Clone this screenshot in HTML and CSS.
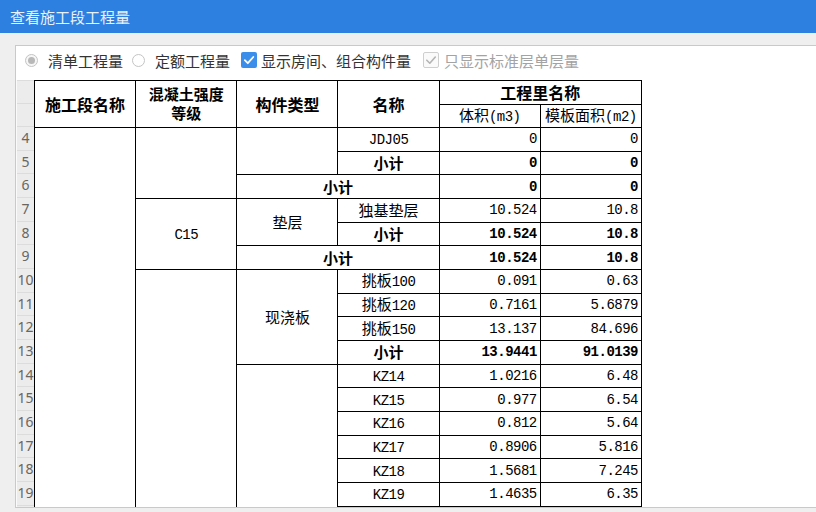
FILE: index.html
```html
<!DOCTYPE html>
<html lang="zh">
<head>
<meta charset="utf-8">
<title>查看施工段工程量</title>
<link rel="stylesheet" href="styles.css">
</head>
<body>
<div class="title">查看施工段工程量</div>
<div class="body">
  <div class="panel">
    <div class="toolbar">
      <span class="radio checked"></span><span class="label l1">清单工程量</span>
      <span class="radio r2"></span><span class="label l2">定额工程量</span>
      <span class="check on"><svg viewBox="0 0 16 16" width="16" height="16"><path d="M3.8 8.2 L6.8 11.2 L12.3 5" fill="none" stroke="#fff" stroke-width="1.8" stroke-linecap="round" stroke-linejoin="round"/></svg></span><span class="label l3">显示房间、组合构件量</span>
      <span class="check off"><svg viewBox="0 0 16 16" width="16" height="16"><path d="M3.8 8.2 L6.8 11.2 L12.3 5" fill="none" stroke="#b4b4b4" stroke-width="1.6" stroke-linecap="round" stroke-linejoin="round"/></svg></span><span class="label dis">只显示标准层单层量</span>
    </div>
    <div class="grid">
      <div class="rowhead">
        <div class="rh hd"></div>
        <div class="rh hd"></div>
        <div class="rh">4</div>
        <div class="rh">5</div>
        <div class="rh">6</div>
        <div class="rh">7</div>
        <div class="rh">8</div>
        <div class="rh">9</div>
        <div class="rh">10</div>
        <div class="rh">11</div>
        <div class="rh">12</div>
        <div class="rh">13</div>
        <div class="rh">14</div>
        <div class="rh">15</div>
        <div class="rh">16</div>
        <div class="rh">17</div>
        <div class="rh">18</div>
        <div class="rh">19</div>
        <div class="rh"></div>
      </div>
      <table class="sheet">
        <colgroup><col><col><col><col><col><col></colgroup>
        <tr class="hr">
          <th rowspan="2">施工段名称</th>
          <th rowspan="2" class="two"><span class="ln">混凝土强度</span><span class="ln">等级</span></th>
          <th rowspan="2">构件类型</th>
          <th rowspan="2">名称</th>
          <th colspan="2">工程里名称</th>
        </tr>
        <tr class="hr">
          <td class="sub">体积<span class="m">(m3)</span></td>
          <td class="sub">模板面积<span class="m">(m2)</span></td>
        </tr>
        <tr>
          <td rowspan="17"></td>
          <td rowspan="3"></td>
          <td rowspan="2"></td>
          <td><span class="m">JDJ05</span></td>
          <td class="n">0</td>
          <td class="n">0</td>
        </tr>
        <tr>
          <td class="b">小计</td>
          <td class="n b">0</td>
          <td class="n b">0</td>
        </tr>
        <tr>
          <td colspan="2" class="b">小计</td>
          <td class="n b">0</td>
          <td class="n b">0</td>
        </tr>
        <tr>
          <td rowspan="3"><span class="m">C15</span></td>
          <td rowspan="2">垫层</td>
          <td>独基垫层</td>
          <td class="n">10.524</td>
          <td class="n">10.8</td>
        </tr>
        <tr>
          <td class="b">小计</td>
          <td class="n b">10.524</td>
          <td class="n b">10.8</td>
        </tr>
        <tr>
          <td colspan="2" class="b">小计</td>
          <td class="n b">10.524</td>
          <td class="n b">10.8</td>
        </tr>
        <tr>
          <td rowspan="11"></td>
          <td rowspan="4">现浇板</td>
          <td>挑板<span class="m">100</span></td>
          <td class="n">0.091</td>
          <td class="n">0.63</td>
        </tr>
        <tr>
          <td>挑板<span class="m">120</span></td>
          <td class="n">0.7161</td>
          <td class="n">5.6879</td>
        </tr>
        <tr>
          <td>挑板<span class="m">150</span></td>
          <td class="n">13.137</td>
          <td class="n">84.696</td>
        </tr>
        <tr>
          <td class="b">小计</td>
          <td class="n b">13.9441</td>
          <td class="n b">91.0139</td>
        </tr>
        <tr>
          <td rowspan="7"></td>
          <td><span class="m">KZ14</span></td>
          <td class="n">1.0216</td>
          <td class="n">6.48</td>
        </tr>
        <tr>
          <td><span class="m">KZ15</span></td>
          <td class="n">0.977</td>
          <td class="n">6.54</td>
        </tr>
        <tr>
          <td><span class="m">KZ16</span></td>
          <td class="n">0.812</td>
          <td class="n">5.64</td>
        </tr>
        <tr>
          <td><span class="m">KZ17</span></td>
          <td class="n">0.8906</td>
          <td class="n">5.816</td>
        </tr>
        <tr>
          <td><span class="m">KZ18</span></td>
          <td class="n">1.5681</td>
          <td class="n">7.245</td>
        </tr>
        <tr>
          <td><span class="m">KZ19</span></td>
          <td class="n">1.4635</td>
          <td class="n">6.35</td>
        </tr>
        <tr>
          <td></td>
          <td></td>
          <td></td>
        </tr>
      </table>
    </div>
  </div>
</div>
</body>
</html>
```

FILE: styles.css
```css
* { box-sizing: border-box; }

html, body {
  margin: 0;
  padding: 0;
}

body {
  width: 816px;
  height: 512px;
  overflow: hidden;
  background: #efefef;
  font-family: "Noto Sans CJK SC", "Noto Sans", sans-serif;
}

.title {
  height: 33px;
  background: #2d7fe0;
  color: #e9f1fc;
  font-size: 15px;
  line-height: 33px;
  padding-left: 10px;
}

.body {
  padding: 12px 0 0 15px;
}

.panel {
  height: 463px;
  background: #fff;
  border-top: 1px solid #c9c9c9;
  border-left: 1px solid #c9c9c9;
  border-bottom: 1px solid #c9c9c9;
  display: flex;
  flex-direction: column;
  overflow: hidden;
}

.toolbar {
  height: 34px;
  flex: none;
  display: flex;
  align-items: center;
  padding: 0 0 6px 9px;
  font-size: 15px;
  color: #333;
}

.radio {
  width: 13px;
  height: 13px;
  border-radius: 50%;
  border: 1px solid #c4c4c4;
  background: #f6f6f6;
  display: flex;
  align-items: center;
  justify-content: center;
  flex: none;
}

.radio.checked::after {
  content: "";
  width: 7px;
  height: 7px;
  border-radius: 50%;
  background: #b8b8b8;
}

.radio.r2 {
  margin-left: 9px;
  background: #fff;
}

.label {
  margin-left: 10px;
  white-space: nowrap;
}

.check {
  width: 16px;
  height: 16px;
  border-radius: 2px;
  flex: none;
  display: flex;
}

.check.on {
  margin-left: 11px;
  background: #3b8ee9;
}

.check.off {
  margin-left: 12px;
  background: #fafafa;
  border: 1px solid #cfcfcf;
}

.check.off svg {
  margin: -1px;
}

.l3 { margin-left: 4px; }

.label.dis {
  margin-left: 5px;
  color: #a3a3a3;
}

.grid {
  height: 427px;
  flex: none;
  overflow: hidden;
  display: flex;
  align-items: flex-start;
}

.rowhead {
  width: 18px;
  flex: none;
  background: #ececec;
  border-left: 1px solid #fafafa;
}

.rh {
  height: 23.67px;
  border-bottom: 1px solid #dcdcdc;
  font-family: "Noto Sans", sans-serif;
  font-size: 14px;
  line-height: 22px;
  color: #6a6560;
  text-align: center;
  white-space: nowrap;
  display: flex;
  justify-content: center;
}

.rh.hd {
  height: 23.5px;
}

.rh.hd:first-child {
  border-top: 1px solid #dcdcdc;
}

.sheet {
  border-collapse: collapse;
  table-layout: fixed;
  width: 608px;
  flex: none;
}

.sheet col {
  width: 101px;
}

.sheet tr {
  height: 23.67px;
}

.sheet tr.hr {
  height: 23.5px;
}

.sheet th,
.sheet td {
  border: 1px solid #000;
  padding: 0 4px;
  text-align: center;
  vertical-align: middle;
  font-size: 15px;
  line-height: 20px;
  color: #000;
  font-weight: 400;
  white-space: nowrap;
  overflow: hidden;
}

.sheet th {
  font-size: 16px;
  font-weight: 700;
}

.sheet th.two {
  font-size: 15px;
  line-height: 22px;
  padding-bottom: 3px;
}

.ln {
  display: block;
  height: 19px;
  line-height: 19px;
}

.sheet .sub {
  font-size: 15px;
}

.m,
.sheet td.n {
  font-family: "Liberation Mono", "Noto Sans CJK SC", monospace;
  font-size: 14px;
  letter-spacing: -0.5px;
}

.sheet td.n {
  text-align: right;
  padding-right: 3px;
}

.sheet td.b {
  font-weight: 700;
}
```
